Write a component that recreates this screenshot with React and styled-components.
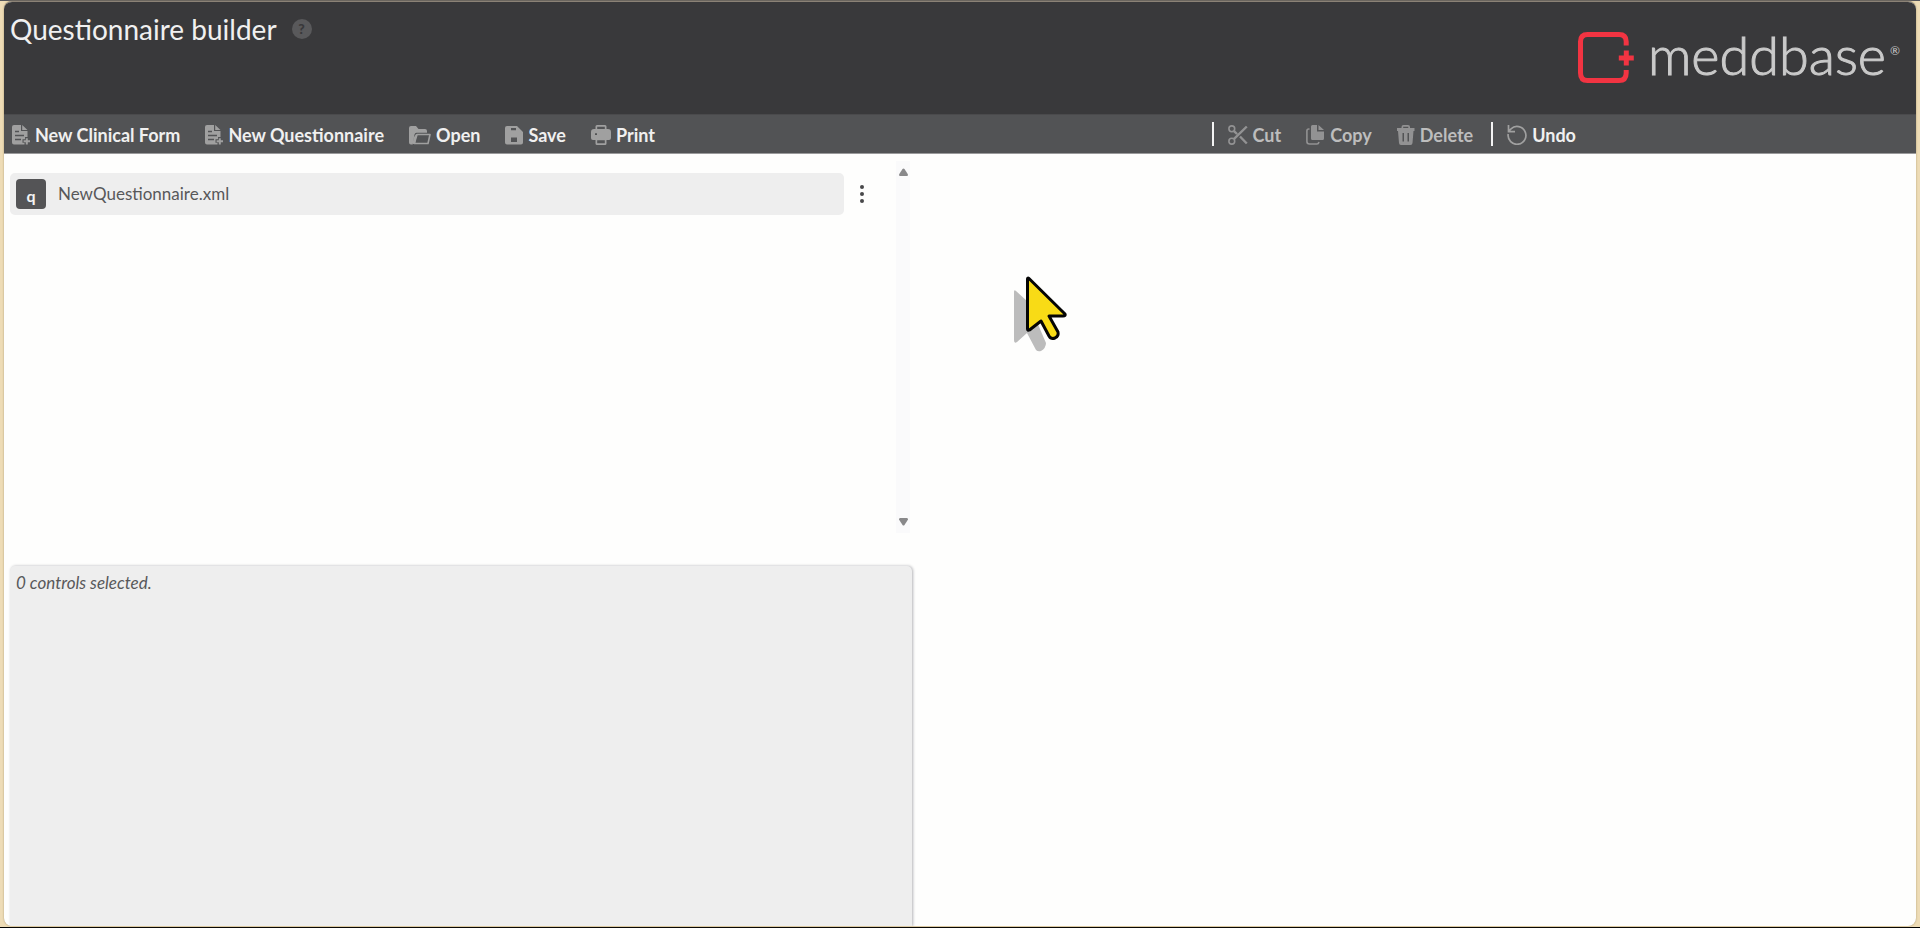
import React from "react";
import styled, { createGlobalStyle } from "styled-components";

const GlobalStyle = createGlobalStyle`
  *, *::before, *::after { box-sizing: border-box; }
  body {
    margin: 0;
    font-family: Lato, "Liberation Sans", sans-serif;
    color: #58585a;
    background: #eedcb6;
  }
  button { font: inherit; color: inherit; border: 0; padding: 0; background: none; cursor: pointer; }
  svg { display: block; flex: none; }
`;

const Frame = styled.div`
  min-height: 100vh;
  display: flex;
  padding: 0 4px 1px;
  border-top: 1px solid #55555a;
  border-bottom: 1px solid #000;
`;

const Window = styled.div`
  flex: 1;
  min-width: 0;
  display: flex;
  flex-direction: column;
  overflow: hidden;
  border-top: 1px solid #8b8276;
  border-radius: 8px;
  background: #fefefd;
  box-shadow: 0 0 2px #a8956c;
`;

const Header = styled.header`
  display: flex;
  justify-content: space-between;
  height: 112px;
  padding: 0 16px 0 6px;
  background: #39393b;
  color: #f0f0f0;
`;

const TitleGroup = styled.div`
  display: flex;
  align-items: center;
  gap: 15px;
  height: 54px;
`;

const Title = styled.h1`
  margin: 0;
  font-size: 28px;
  line-height: 32px;
  font-weight: 400;
`;

const HelpButton = styled.button`
  width: 20px;
  height: 20px;
  border-radius: 50%;
  background: #59595b;
  color: #38383a;
  font-size: 14px;
  line-height: 20px;
  font-weight: 900;
`;

const Brand = styled.div`
  display: flex;
  align-items: center;
  gap: 14px;
  height: 110px;
`;

const BrandName = styled.span`
  display: flex;
  gap: 4px;
  padding-bottom: 4px;
  font-size: 54px;
  line-height: 64px;
  font-weight: 300;
  color: #c9c9c9;
  -webkit-text-stroke: 1px #c9c9c9;
`;

const Registered = styled.small`
  font-size: 12px;
  line-height: 56px;
  font-weight: 400;
  -webkit-text-stroke: 0;
`;

const Toolbar = styled.nav`
  display: grid;
  grid-template-columns: 12fr 7fr;
  height: 40px;
  border-top: 1px solid #4a4a4c;
  border-bottom: 1px solid #9a9a9b;
  background: #525355;
`;

const ToolGroup = styled.div`
  display: flex;
  align-items: center;
  gap: 25px;
  padding-left: ${(p) => p.$inset || "0"};
`;

const ToolButton = styled.button`
  display: flex;
  align-items: center;
  gap: 5px;
  padding-top: 2px;
  font-size: 18px;
  line-height: 24px;
  font-weight: 700;
  white-space: nowrap;
  color: ${(p) => (p.disabled ? "#bdbdbd" : "#f0f0f0")};
  svg { color: ${(p) => (p.disabled ? "#929293" : "#a0a0a0")}; }
`;

const Divided = styled.div`
  display: flex;
  align-items: center;
  height: 24px;
  padding-left: 14px;
  border-left: 2px solid #f4f4f4;
  margin-left: ${(p) => p.$pull || "0"};
`;

const Workspace = styled.main`
  flex: 1;
  display: grid;
  grid-template-columns: 19fr 21fr;
`;

const Sidebar = styled.div`
  display: grid;
  grid-template-rows: 8fr 7fr;
  padding-left: 6px;
`;

const Explorer = styled.section`
  display: flex;
  align-items: stretch;
  padding: 7px 0 33px;
`;

const FileList = styled.ul`
  flex: 1;
  margin: 0;
  padding: 12px 0 0;
  list-style: none;
`;

const FileRow = styled.li`
  display: flex;
  align-items: center;
  gap: 8px;
  padding-right: 24px;
`;

const FileButton = styled.button`
  flex: 1;
  display: flex;
  align-items: center;
  gap: 12px;
  height: 42px;
  padding: 0 6px;
  border-radius: 5px;
  background: #eeeeee;
  font-size: 17px;
  line-height: 24px;
`;

const FileBadge = styled.span`
  width: 30px;
  height: 30px;
  border-radius: 4px;
  background: #545456;
  color: #f4f4f4;
  font-size: 16px;
  line-height: 34px;
  font-weight: 700;
  text-align: center;
`;

const MenuButton = styled.button`
  display: grid;
  place-items: center;
  width: 20px;
  height: 32px;
`;

const ScrollTrack = styled.div`
  display: flex;
  flex-direction: column;
  justify-content: space-between;
  align-items: center;
  width: 14px;
  margin-right: 2px;
  padding: 7px 0;
  background: #fafafb;
`;

const Properties = styled.section`
  padding: 5px 6px;
  border-radius: 5px 5px 0 0;
  background: #eeeeee;
  box-shadow: 1px 0 3px #b4b4b8;
`;

const Status = styled.p`
  margin: 0;
  font-size: 17px;
  line-height: 24px;
  font-style: italic;
`;

const Canvas = styled.section``;

const Pointer = styled.svg`
  position: absolute;
  left: 1012px;
  top: 274px;
  pointer-events: none;
`;

const NewFormIcon = () => (
  <svg width="18" height="20" viewBox="0 0 18 20" fill="currentColor" aria-hidden="true">
    <path fillRule="evenodd" d="M2 0H9V6H15.5V12H13V14.2H10.5V17.8H12.5V19.5H2Q0 19.5 0 17.5V2Q0 0 2 0ZM3 5.7V7.2H7V5.7ZM3 9.7V11.2H12V9.7ZM3 13.8V15.3H9V13.8Z" />
    <path d="M10.2 0L15.5 5H10.2ZM13.8 13.2H15.8V15.2H18V17.2H15.8V19.5H13.8V17.2H11.6V15.2H13.8Z" />
  </svg>
);

const OpenIcon = () => (
  <svg width="22" height="19" viewBox="0 0 22 19" fill="currentColor" aria-hidden="true">
    <path d="M2 0H7L9.5 3H16Q18 3 18 5V6.8H7.5Q5.8 6.8 5.5 8.5L3.7 18.5H2Q0 18.5 0 16.5V2Q0 0 2 0Z" />
    <path d="M8 8.5H21L19 17.5H5.3Z" fill="none" stroke="currentColor" strokeWidth="1.6" strokeLinejoin="round" />
    <path d="M4.500 12L7 8H8L6 18H3.500Z" />
  </svg>
);

const SaveIcon = () => (
  <svg width="18" height="19" viewBox="0 0 18 19" fill="currentColor" aria-hidden="true">
    <path fillRule="evenodd" d="M2 0H12L18 6V16.5Q18 18.5 16 18.5H2Q0 18.5 0 16.5V2Q0 0 2 0ZM6 2V4.2H11V2ZM6 11.5V16H12V11.5Z" />
  </svg>
);

const PrintIcon = () => (
  <svg width="20" height="21" viewBox="0 0 20 21" fill="currentColor" aria-hidden="true">
    <path fillRule="evenodd" d="M6 0H14Q15.5 0 15.5 1.5V4H17Q20 4 20 7V13Q20 15 18 15H15.5V18.5Q15.5 20 14 20H6Q4.5 20 4.5 18.5V15H2Q0 15 0 13V7Q0 4 3 4H4.5V1.5Q4.5 0 6 0ZM6.2 1.7V4H13.8V1.7ZM6.2 15.2V18.2H13.8V15.2ZM4 8.2V10H6V8.2Z" />
  </svg>
);

const CutIcon = () => (
  <svg width="20" height="20" viewBox="0 0 20 20" fill="none" stroke="currentColor" aria-hidden="true">
    <circle cx="3.8" cy="3.8" r="2.9" strokeWidth="1.6" />
    <circle cx="3.8" cy="16.2" r="2.9" strokeWidth="1.6" />
    <path d="M5.8 14.2L18.8 1.5M5.8 5.8L9 9M12 11.5L18.8 18.5" strokeWidth="2.4" />
  </svg>
);

const CopyIcon = () => (
  <svg width="19" height="20" viewBox="0 0 19 20" fill="currentColor" aria-hidden="true">
    <path d="M6.5 0H11V6.5H18V13.5Q18 15 16.5 15H6.5Q5 15 5 13.5V1.5Q5 0 6.5 0ZM12.5 0L18 5H12.5Z" />
    <path d="M3.5 4H2.8Q.9 4 .9 6V16.5Q.9 19 3.5 19H11Q12.5 19 13 17" fill="none" stroke="currentColor" strokeWidth="1.6" />
  </svg>
);

const DeleteIcon = () => (
  <svg width="18" height="20" viewBox="0 0 18 20" fill="currentColor" aria-hidden="true">
    <path fillRule="evenodd" d="M4.5 3V2Q4.5 0 6.5 0H11Q13 0 13 2V3H17.5V6H16.5L15.5 18Q15.4 20 13.5 20H4Q2.1 20 2 18L1 6H0V3ZM6.2 3H11.3V1.7H6.2ZM5.5 8V16.5H7V8ZM10.5 8V16.5H12V8Z" />
  </svg>
);

const UndoIcon = () => (
  <svg width="20" height="20" viewBox="0 0 20 20" fill="none" stroke="currentColor" strokeWidth="1.7" aria-hidden="true">
    <path d="M1.2 9A8.9 8.9 0 1 0 4 3.8Q2.6 5 1.6 6.5M1.5 0V6.7H8" />
  </svg>
);

const LogoMark = () => (
  <svg width="56" height="51" viewBox="0 0 56 51" fill="none" stroke="#f23442" aria-hidden="true">
    <path d="M48.2 13.5V9.5Q48.2 2.5 41 2.5H9.5Q2.5 2.5 2.5 9.5V41Q2.5 48.5 9.5 48.5H41Q48.2 48.5 48.2 41V38" strokeWidth="5" />
    <path d="M48.3 18.5V33.5M40.8 26H55.8" strokeWidth="5" />
  </svg>
);

const leftTools = [
  ["New Clinical Form", NewFormIcon],
  ["New Questionnaire", NewFormIcon],
  ["Open", OpenIcon],
  ["Save", SaveIcon],
  ["Print", PrintIcon],
];

const Tool = ({ label, icon: Icon, disabled }) => (
  <ToolButton type="button" disabled={disabled}>
    <Icon />
    {label}
  </ToolButton>
);

export default function App() {
  return (
    <>
      <GlobalStyle />
      <Frame>
        <Window>
          <Header>
            <TitleGroup>
              <Title>Questionnaire builder</Title>
              <HelpButton type="button" aria-label="Help">?</HelpButton>
            </TitleGroup>
            <Brand>
              <LogoMark />
              <BrandName>
                meddbase
                <Registered>®</Registered>
              </BrandName>
            </Brand>
          </Header>
          <Toolbar aria-label="Builder tools">
            <ToolGroup $inset="8px">
              {leftTools.map(([label, icon]) => (
                <Tool key={label} label={label} icon={icon} />
              ))}
            </ToolGroup>
            <ToolGroup>
              <Divided>
                <Tool label="Cut" icon={CutIcon} disabled />
              </Divided>
              <Tool label="Copy" icon={CopyIcon} disabled />
              <Tool label="Delete" icon={DeleteIcon} disabled />
              <Divided $pull="-7px">
                <Tool label="Undo" icon={UndoIcon} />
              </Divided>
            </ToolGroup>
          </Toolbar>
          <Workspace>
            <Sidebar>
              <Explorer>
                <FileList>
                  <FileRow>
                    <FileButton type="button">
                      <FileBadge>q</FileBadge>
                      NewQuestionnaire.xml
                    </FileButton>
                    <MenuButton type="button" aria-label="File menu">
                      <svg width="4" height="18" viewBox="0 0 4 18" fill="#48484a">
                        <circle cx="2" cy="2" r="2" />
                        <circle cx="2" cy="9" r="2" />
                        <circle cx="2" cy="16" r="2" />
                      </svg>
                    </MenuButton>
                  </FileRow>
                </FileList>
                <ScrollTrack>
                  <button type="button" aria-label="Scroll up">
                    <svg width="9" height="8" viewBox="0 0 9 8" fill="#88888a"><path d="M3.5 1Q4.5 0 5.5 1L9 6.5Q9 8 8 8H1Q0 8 0 6.5Z" /></svg>
                  </button>
                  <button type="button" aria-label="Scroll down">
                    <svg width="9" height="8" viewBox="0 0 9 8" fill="#88888a"><path d="M3.5 7Q4.5 8 5.5 7L9 1.5Q9 0 8 0H1Q0 0 0 1.5Z" /></svg>
                  </button>
                </ScrollTrack>
              </Explorer>
              <Properties aria-label="Properties">
                <Status>0 controls selected.</Status>
              </Properties>
            </Sidebar>
            <Canvas aria-label="Form canvas" />
          </Workspace>
        </Window>
      </Frame>
      <Pointer width="58" height="82" viewBox="0 0 58 82" aria-hidden="true">
        <path d="M4 17L38 48H25L34 69Q34 74 29 77Q26 78 24 76L15 59L5 68Q2 70 2 66V18Q2 15 4 17Z" fill="#bcbcbc" />
        <path d="M17 4.5L53 40Q54 42 51 42H37L46 58Q47 62 43 64Q39 65.500 37 62L29 47L17.500 56Q15.500 57 15.500 55V5Q15.500 3.500 17 4.500Z" fill="#f8db16" stroke="#050505" strokeWidth="3" strokeLinejoin="round" />
      </Pointer>
    </>
  );
}
